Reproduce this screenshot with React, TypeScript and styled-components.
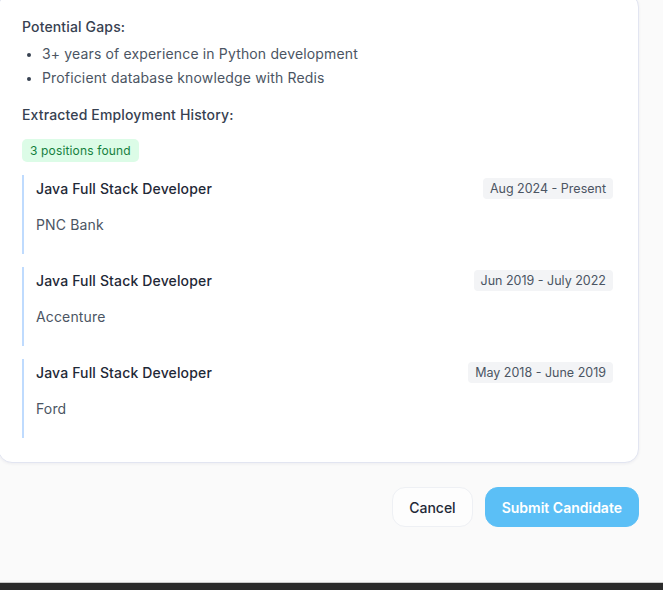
import React from "react";
import styled, { createGlobalStyle } from "styled-components";

const Global = createGlobalStyle`
  html, body { margin: 0; padding: 0; }
  body {
    background: #fafafa;
    font-family: Inter, "Noto Sans", "Liberation Sans", sans-serif;
    -webkit-font-smoothing: antialiased;
  }
  * { box-sizing: border-box; }
`;

const Page = styled.div`
  height: 590px;
  display: flex;
  flex-direction: column;
  overflow: hidden;
`;

const Main = styled.div`
  flex: 1;
  display: flex;
  flex-direction: column;
  padding: 0 24px 0 0;
  overflow: hidden;
`;

const Card = styled.section`
  margin: -7px 0 0 -2px;
  background: #ffffff;
  border: 1px solid #e2e5f1;
  border-radius: 14px;
  box-shadow: 0 1px 3px rgba(30, 40, 90, 0.06);
  padding: 23px 25px 24px 23px;
  display: flex;
  flex-direction: column;
  letter-spacing: 0.15px;
`;

const SectionTitle = styled.h4<{ $gap: number }>`
  margin: 0 0 ${(p) => p.$gap}px;
  font-size: 14px;
  line-height: 20px;
  font-weight: 500;
  color: #374151;
`;

const List = styled.ul`
  margin: 0 0 15px;
  padding-left: 20px;
  list-style: disc;
`;

const Item = styled.li`
  font-size: 14px;
  line-height: 24px;
  color: #4b5563;
  &::marker { color: #374151; font-size: 12px; }
`;

const CountBadge = styled.span`
  align-self: flex-start;
  background: #dcfce7;
  color: #15803d;
  font-size: 12px;
  line-height: 16px;
  padding: 4px 8px 3px;
  border-radius: 5px;
  margin-bottom: 13px;
`;

const Entries = styled.div`
  display: flex;
  flex-direction: column;
  gap: 13px;
`;

const Entry = styled.div`
  border-left: 2px solid #bfdbfe;
  padding: 3px 0 19px 12px;
`;

const EntryHead = styled.div`
  display: flex;
  align-items: center;
  justify-content: space-between;
`;

const Role = styled.span`
  font-size: 14px;
  line-height: 20px;
  font-weight: 500;
  color: #1f2937;
`;

const DateTag = styled.span`
  background: #f3f4f6;
  color: #4b5563;
  font-size: 12.5px;
  line-height: 17px;
  letter-spacing: 0;
  padding: 2px 7px;
  border-radius: 4px;
`;

const Company = styled.div`
  margin-top: 16px;
  font-size: 14px;
  line-height: 20px;
  color: #4b5563;
`;

const Actions = styled.div`
  display: flex;
  justify-content: flex-end;
  align-items: center;
  gap: 12px;
  margin-top: 24px;
`;

const Button = styled.button<{ $primary?: boolean }>`
  height: 40px;
  padding: 0 16px;
  border-radius: 13px;
  font-family: inherit;
  font-size: 14px;
  cursor: pointer;
  border: 1px solid ${(p) => (p.$primary ? "#5bbff6" : "#eef0f4")};
  background: ${(p) => (p.$primary ? "#5bbff6" : "#fdfdfd")};
  color: ${(p) => (p.$primary ? "#ffffff" : "#1f2937")};
  font-weight: ${(p) => (p.$primary ? 600 : 500)};
`;

const Footer = styled.div`
  height: 8px;
  flex: none;
  background: #2b2b2b;
  border-top: 1px solid #c9c9c9;
`;

const gaps = [
  "3+ years of experience in Python development",
  "Proficient database knowledge with Redis",
];

const jobs = [
  { role: "Java Full Stack Developer", company: "PNC Bank", dates: "Aug 2024 - Present" },
  { role: "Java Full Stack Developer", company: "Accenture", dates: "Jun 2019 - July 2022" },
  { role: "Java Full Stack Developer", company: "Ford", dates: "May 2018 - June 2019" },
];

export default function App() {
  return (
    <Page>
      <Global />
      <Main>
        <Card>
          <SectionTitle $gap={5}>Potential Gaps:</SectionTitle>
          <List>
            {gaps.map((g) => (
              <Item key={g}>{g}</Item>
            ))}
          </List>
          <SectionTitle $gap={14}>Extracted Employment History:</SectionTitle>
          <CountBadge>3 positions found</CountBadge>
          <Entries>
            {jobs.map((j) => (
              <Entry key={j.company}>
                <EntryHead>
                  <Role>{j.role}</Role>
                  <DateTag>{j.dates}</DateTag>
                </EntryHead>
                <Company>{j.company}</Company>
              </Entry>
            ))}
          </Entries>
        </Card>
        <Actions>
          <Button>Cancel</Button>
          <Button $primary>Submit Candidate</Button>
        </Actions>
      </Main>
      <Footer />
    </Page>
  );
}
